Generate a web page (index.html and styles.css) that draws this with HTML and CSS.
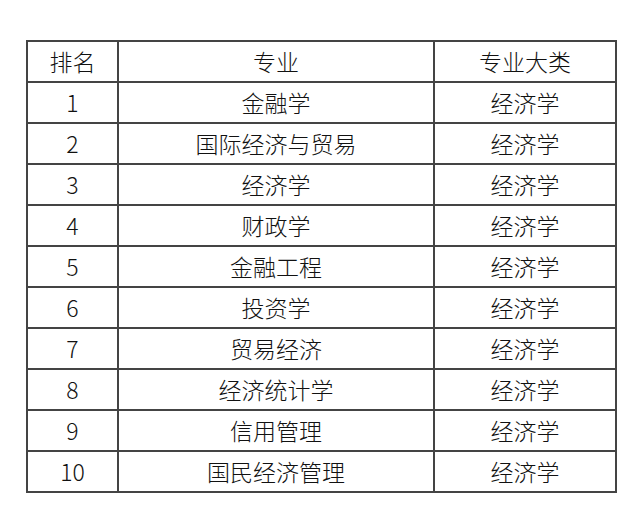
FILE: index.html
```html
<!DOCTYPE html>
<html lang="zh">
<head>
<meta charset="utf-8">
<link rel="stylesheet" href="styles.css">
</head>
<body>
<table class="rank">
<colgroup><col class="c1"><col class="c2"><col class="c3"></colgroup>
<tr><td>排名</td><td>专业</td><td>专业大类</td></tr>
<tr><td>1</td><td>金融学</td><td>经济学</td></tr>
<tr><td>2</td><td>国际经济与贸易</td><td>经济学</td></tr>
<tr><td>3</td><td>经济学</td><td>经济学</td></tr>
<tr><td>4</td><td>财政学</td><td>经济学</td></tr>
<tr><td>5</td><td>金融工程</td><td>经济学</td></tr>
<tr><td>6</td><td>投资学</td><td>经济学</td></tr>
<tr><td>7</td><td>贸易经济</td><td>经济学</td></tr>
<tr><td>8</td><td>经济统计学</td><td>经济学</td></tr>
<tr><td>9</td><td>信用管理</td><td>经济学</td></tr>
<tr><td>10</td><td>国民经济管理</td><td>经济学</td></tr>
</table>
</body>
</html>
```
FILE: styles.css
```css
html, body {
  margin: 0;
  background: #fff;
}
body {
  padding: 40px 0 0 26px;
  font-family: "Noto Sans CJK SC", "Noto Sans", sans-serif;
  color: #111;
}
.rank {
  border-collapse: collapse;
  table-layout: fixed;
  width: 589px;
}
.c1 { width: 91px; }
.c2 { width: 316px; }
.c3 { width: 182px; }
.rank td {
  border: 2px solid #444;
  height: 41px;
  padding: 0;
  box-sizing: border-box;
  text-align: center;
  vertical-align: middle;
  font-size: 23px;
  font-weight: 300;
  line-height: 1;
}
```
